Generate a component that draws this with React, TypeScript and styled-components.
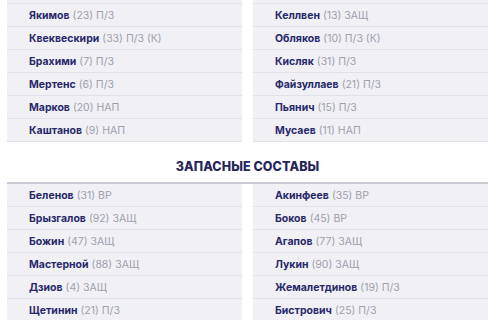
import styled, { createGlobalStyle } from 'styled-components';

type Player = { name: string; info: string };

const startersLeft: Player[] = [
  { name: 'Якимов', info: '(23) П/З' },
  { name: 'Квеквескири', info: '(33) П/З (К)' },
  { name: 'Брахими', info: '(7) П/З' },
  { name: 'Мертенс', info: '(6) П/З' },
  { name: 'Марков', info: '(20) НАП' },
  { name: 'Каштанов', info: '(9) НАП' },
];

const startersRight: Player[] = [
  { name: 'Келлвен', info: '(13) ЗАЩ' },
  { name: 'Обляков', info: '(10) П/З (К)' },
  { name: 'Кисляк', info: '(31) П/З' },
  { name: 'Файзуллаев', info: '(21) П/З' },
  { name: 'Пьянич', info: '(15) П/З' },
  { name: 'Мусаев', info: '(11) НАП' },
];

const subsLeft: Player[] = [
  { name: 'Беленов', info: '(31) ВР' },
  { name: 'Брызгалов', info: '(92) ЗАЩ' },
  { name: 'Божин', info: '(47) ЗАЩ' },
  { name: 'Мастерной', info: '(88) ЗАЩ' },
  { name: 'Дзиов', info: '(4) ЗАЩ' },
  { name: 'Щетинин', info: '(21) П/З' },
];

const subsRight: Player[] = [
  { name: 'Акинфеев', info: '(35) ВР' },
  { name: 'Боков', info: '(45) ВР' },
  { name: 'Агапов', info: '(77) ЗАЩ' },
  { name: 'Лукин', info: '(90) ЗАЩ' },
  { name: 'Жемалетдинов', info: '(19) П/З' },
  { name: 'Бистрович', info: '(25) П/З' },
];

function PlayerList({ players, lead }: { players: Player[]; lead?: boolean }) {
  return (
    <List>
      {lead && <Row />}
      {players.map((p) => (
        <Row key={p.name}>
          <Name>{p.name}</Name>
          <Info>{p.info}</Info>
        </Row>
      ))}
    </List>
  );
}

export default function App() {
  return (
    <>
      <GlobalStyle />
      <Page>
        <Columns>
          <PlayerList players={startersLeft} lead />
          <PlayerList players={startersRight} lead />
        </Columns>
        <Title>Запасные составы</Title>
        <SubsColumns>
          <PlayerList players={subsLeft} />
          <PlayerList players={subsRight} />
        </SubsColumns>
      </Page>
    </>
  );
}

const GlobalStyle = createGlobalStyle`
  html, body {
    margin: 0;
    background: #ffffff;
    overflow: hidden;
  }
  body {
    font-family: Inter, 'Noto Sans', sans-serif;
  }
`;

const Page = styled.div`
  width: 500px;
  height: 320px;
  overflow: hidden;
  padding: 0 12px 0 7px;
  box-sizing: border-box;
`;

const Columns = styled.div`
  display: grid;
  grid-template-columns: 235px 235px;
  column-gap: 11px;
  margin-top: -19px;
`;

const SubsColumns = styled(Columns)`
  margin-top: 0;
  border-top: 2px solid #c9c9d1;
`;

const List = styled.div`
  display: flex;
  flex-direction: column;
`;

const Row = styled.div`
  height: 22px;
  display: flex;
  align-items: center;
  padding-left: 22px;
  background: #f0f0f5;
  border-bottom: 1px solid #e1e1e9;
  font-size: 10.5px;
  white-space: nowrap;
`;

const Name = styled.span`
  font-weight: 700;
  color: #29296a;
  margin-right: 3px;
`;

const Info = styled.span`
  color: #a0a0ac;
`;

const Title = styled.div`
  height: 40px;
  display: flex;
  align-items: center;
  justify-content: center;
  padding-top: 8px;
  box-sizing: border-box;
  font-size: 12.5px;
  font-weight: 800;
  text-transform: uppercase;
  color: #25255a;
  letter-spacing: 0.1px;
`;
